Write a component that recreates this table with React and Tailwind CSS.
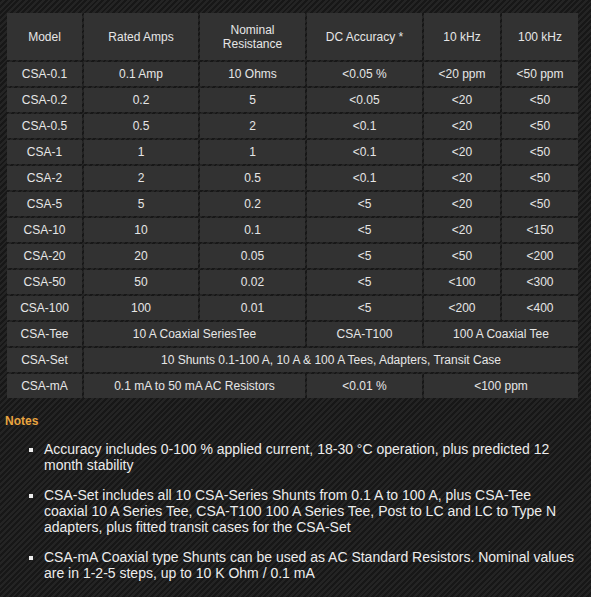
const rows = [
  ["CSA-0.1", "0.1 Amp", "10 Ohms", "<0.05 %", "<20 ppm", "<50 ppm"],
  ["CSA-0.2", "0.2", "5", "<0.05", "<20", "<50"],
  ["CSA-0.5", "0.5", "2", "<0.1", "<20", "<50"],
  ["CSA-1", "1", "1", "<0.1", "<20", "<50"],
  ["CSA-2", "2", "0.5", "<0.1", "<20", "<50"],
  ["CSA-5", "5", "0.2", "<5", "<20", "<50"],
  ["CSA-10", "10", "0.1", "<5", "<20", "<150"],
  ["CSA-20", "20", "0.05", "<5", "<50", "<200"],
  ["CSA-50", "50", "0.02", "<5", "<100", "<300"],
  ["CSA-100", "100", "0.01", "<5", "<200", "<400"],
];

const notes = [
  "Accuracy includes 0-100 % applied current, 18-30 °C operation, plus predicted 12 month stability",
  "CSA-Set includes all 10 CSA-Series Shunts from 0.1 A to 100 A, plus CSA-Tee coaxial 10 A Series Tee, CSA-T100 100 A Series Tee, Post to LC and LC to Type N adapters, plus fitted transit cases for the CSA-Set",
  "CSA-mA Coaxial type Shunts can be used as AC Standard Resistors. Nominal values are in 1-2-5 steps, up to 10 K Ohm / 0.1 mA",
];

function Cell({ children, className = "" }) {
  return (
    <div
      className={`bg-[#323232] flex items-center justify-center text-center leading-[14px] px-2 ${className}`}
    >
      {children}
    </div>
  );
}

export default function App() {
  return (
    <div className="w-[591px] h-[597px] overflow-hidden bg-[repeating-linear-gradient(135deg,#171717_0px,#171717_2px,#242424_2px,#242424_4px)] text-[#e6e6e6] font-['Liberation_Sans',Arial,sans-serif] pt-[13px]">
      <div className="ml-[7px] w-[571px] grid grid-cols-[75px_114px_105px_115px_76px_76px] grid-rows-[47px] auto-rows-[24px] gap-[2px] text-[12px]">
        <Cell>Model</Cell>
        <Cell>Rated Amps</Cell>
        <Cell>
          Nominal
          <br />
          Resistance
        </Cell>
        <Cell>DC Accuracy *</Cell>
        <Cell>10 kHz</Cell>
        <Cell>100 kHz</Cell>

        {rows.map((r) =>
          r.map((c, i) => <Cell key={r[0] + i}>{c}</Cell>)
        )}

        <Cell>CSA-Tee</Cell>
        <Cell className="col-span-2">10 A Coaxial SeriesTee</Cell>
        <Cell>CSA-T100</Cell>
        <Cell className="col-span-2">100 A Coaxial Tee</Cell>

        <Cell>CSA-Set</Cell>
        <Cell className="col-span-5">
          10 Shunts 0.1-100 A, 10 A &amp; 100 A Tees, Adapters, Transit Case
        </Cell>

        <Cell>CSA-mA</Cell>
        <Cell className="col-span-2">0.1 mA to 50 mA AC Resistors</Cell>
        <Cell>&lt;0.01 %</Cell>
        <Cell className="col-span-2">&lt;100 ppm</Cell>
      </div>

      <div className="mt-[16px] ml-[5px] text-[12px] leading-[14px] font-bold text-[#e9a540]">
        Notes
      </div>

      <ul className="list-[square] mt-[13px] ml-[44px] w-[533px] text-[14px] leading-[16px] text-[#ececec]">
        {notes.map((n) => (
          <li key={n} className="mb-[14px]">
            {n}
          </li>
        ))}
      </ul>
    </div>
  );
}
